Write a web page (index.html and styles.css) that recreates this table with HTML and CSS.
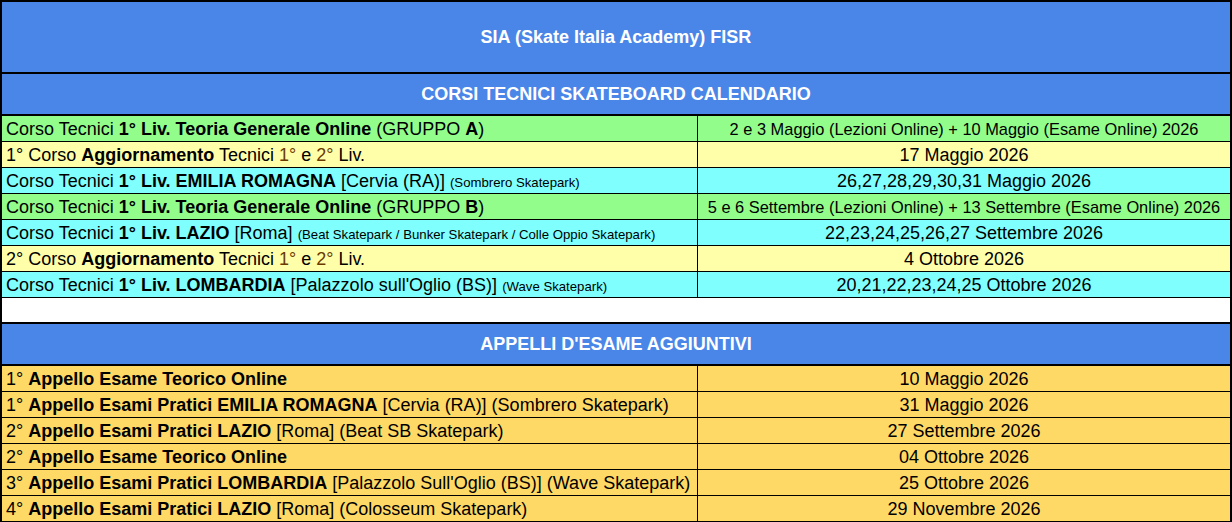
FILE: index.html
```html
<!DOCTYPE HTML>
<html>

	<head>
		<meta http-equiv="Content-Type" content="text/html; charset=utf-8">
		<link rel="stylesheet" href="styles.css">
	</head>

	<body>
		<table class="cal">
			<colgroup>
				<col class="col-name">
				<col class="col-date">
			</colgroup>
			<tr>
				<td colspan="2" class="title">SIA (Skate Italia Academy) FISR</td>
			</tr>
			<tr>
				<td colspan="2" class="head">CORSI TECNICI SKATEBOARD CALENDARIO</td>
			</tr>
			<tr class="green">
				<td class="name">Corso Tecnici <b>1° Liv. Teoria Generale Online</b> (GRUPPO <b>A</b>)</td>
				<td class="date small-date">2 e 3 Maggio (Lezioni Online) + 10 Maggio (Esame Online) 2026</td>
			</tr>
			<tr class="yellow">
				<td class="name">1° Corso <b>Aggiornamento</b> Tecnici <span class="hl">1°</span> e <span class="hl">2°</span> Liv.</td>
				<td class="date">17 Maggio 2026</td>
			</tr>
			<tr class="cyan">
				<td class="name">Corso Tecnici <b>1° Liv. EMILIA ROMAGNA</b> [Cervia (RA)] <span class="note">(Sombrero Skatepark)</span></td>
				<td class="date">26,27,28,29,30,31 Maggio 2026</td>
			</tr>
			<tr class="green">
				<td class="name">Corso Tecnici <b>1° Liv. Teoria Generale Online</b> (GRUPPO <b>B</b>)</td>
				<td class="date small-date">5 e 6 Settembre (Lezioni Online) + 13 Settembre (Esame Online) 2026</td>
			</tr>
			<tr class="cyan">
				<td class="name">Corso Tecnici <b>1° Liv. LAZIO</b> [Roma] <span class="note">(Beat Skatepark / Bunker Skatepark / Colle Oppio Skatepark)</span></td>
				<td class="date">22,23,24,25,26,27 Settembre 2026</td>
			</tr>
			<tr class="yellow">
				<td class="name">2° Corso <b>Aggiornamento</b> Tecnici <span class="hl">1°</span> e <span class="hl">2°</span> Liv.</td>
				<td class="date">4 Ottobre 2026</td>
			</tr>
			<tr class="cyan">
				<td class="name">Corso Tecnici <b>1° Liv. LOMBARDIA</b> [Palazzolo sull'Oglio (BS)] <span class="note">(Wave Skatepark)</span></td>
				<td class="date">20,21,22,23,24,25 Ottobre 2026</td>
			</tr>
			<tr>
				<td colspan="2" class="gap">&nbsp;</td>
			</tr>
			<tr>
				<td colspan="2" class="head">APPELLI D'ESAME AGGIUNTIVI</td>
			</tr>
			<tr class="orange">
				<td class="name">1° <b>Appello Esame Teorico Online</b></td>
				<td class="date">10 Maggio 2026</td>
			</tr>
			<tr class="orange">
				<td class="name">1° <b>Appello Esami Pratici EMILIA ROMAGNA</b> [Cervia (RA)] (Sombrero Skatepark)</td>
				<td class="date">31 Maggio 2026</td>
			</tr>
			<tr class="orange">
				<td class="name">2° <b>Appello Esami Pratici LAZIO</b> [Roma] (Beat SB Skatepark)</td>
				<td class="date">27 Settembre 2026</td>
			</tr>
			<tr class="orange">
				<td class="name">2° <b>Appello Esame Teorico Online</b></td>
				<td class="date">04 Ottobre 2026</td>
			</tr>
			<tr class="orange">
				<td class="name">3° <b>Appello Esami Pratici LOMBARDIA</b> [Palazzolo Sull'Oglio (BS)] (Wave Skatepark)</td>
				<td class="date">25 Ottobre 2026</td>
			</tr>
			<tr class="orange">
				<td class="name">4° <b>Appello Esami Pratici LAZIO</b> [Roma] (Colosseum Skatepark)</td>
				<td class="date">29 Novembre 2026</td>
			</tr>
		</table>
	</body>

</html>
```

FILE: styles.css
```css
* {
	margin: 0;
	padding: 0;
}

body {
	background: #fff;
	font-family: "Liberation Sans", Arial, sans-serif;
	color: #000;
}

.cal {
	width: 1232px;
	box-sizing: border-box;
	table-layout: fixed;
	border: 2px solid #000;
	border-spacing: 0;
}

.col-name {
	width: 696px;
}

.cal td {
	padding: 1px 4px 0;
	line-height: 24px;
	font-size: 18px;
	white-space: nowrap;
	overflow: hidden;
	border-bottom: 1px solid #000;
}

.cal .title,
.cal .head {
	padding-top: 0;
	background: #4a86e8;
	color: #fff;
	font-weight: bold;
	text-align: center;
	border-bottom-width: 2px;
}

.cal .title {
	line-height: 70px;
}

.cal .head {
	line-height: 40px;
}

.cal .gap {
	padding-top: 0;
	background: #fff;
	line-height: 24px;
	border-bottom-width: 2px;
}

.cal .name {
	border-right: 1px solid #000;
}

.cal .date {
	text-align: center;
}

.cal .small-date {
	font-size: 16.4px;
}

.note {
	font-size: 13.2px;
	line-height: 1;
}

.hl {
	color: #6b3a00;
}

.green td {
	background: #93fd8c;
}

.yellow td {
	background: #ffffaa;
}

.cyan td {
	background: #80ffff;
}

.orange td {
	background: #ffd966;
}
```
